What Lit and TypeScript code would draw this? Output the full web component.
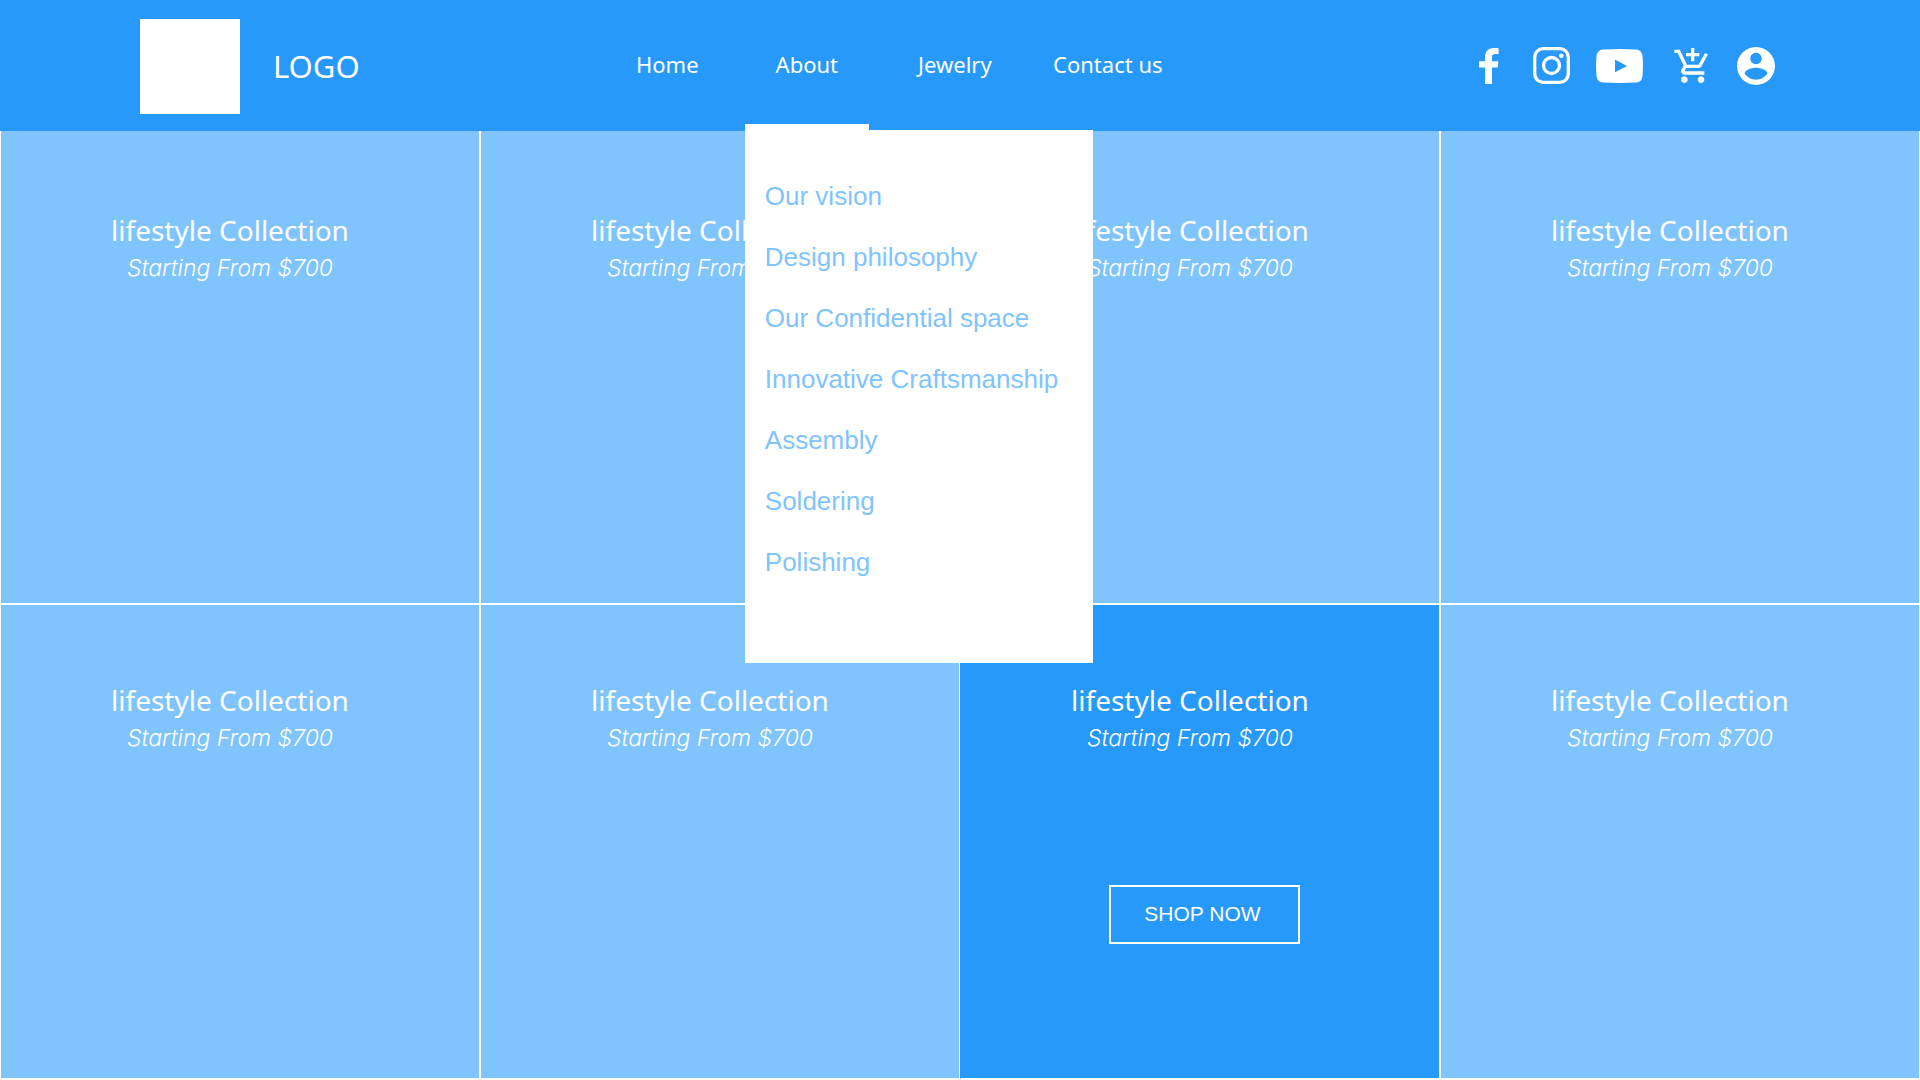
import { LitElement, html, css, svg, nothing } from "lit";
import { customElement, property, state } from "lit/decorators.js";
import { classMap } from "lit/directives/class-map.js";

interface Collection {
  title: string;
  price: string;
  featured?: boolean;
}

const ABOUT_LINKS = [
  "Our vision",
  "Design philosophy",
  "Our Confidential space",
  "Innovative Craftsmanship",
  "Assembly",
  "Soldering",
  "Polishing",
];

const COLLECTIONS: Collection[] = Array.from({ length: 8 }, (_, i) => ({
  title: "lifestyle Collection",
  price: "Starting From $700",
  featured: i === 6,
}));

const ICONS = [
  {
    label: "Facebook",
    box: "0 0 36 36",
    width: 36,
    height: 36,
    shape: svg`<path d="M14 36V19.500H8V13.200H14V9.500C14 3.500 17.300 0 22.500 0C24.800 0 26.800 .2 27.600 .4V6.100H24.200C21.600 6.100 21 7.400 21 9.200V13.200H27.400L26.600 19.500H21V36Z"/>`,
  },
  {
    label: "Instagram",
    box: "0 0 37 37",
    width: 37,
    height: 37,
    shape: svg`<rect x="1.700" y="1.700" width="33.600" height="33.600" rx="8.500" fill="none" stroke="currentColor" stroke-width="3.300"/><circle cx="18.500" cy="18.500" r="8" fill="none" stroke="currentColor" stroke-width="3.300"/><circle cx="28.300" cy="8.700" r="2.300"/>`,
  },
  {
    label: "YouTube",
    box: "0 0 47 34",
    width: 47,
    height: 34,
    shape: svg`<path fill-rule="evenodd" d="M7 .5Q23.500 -.4 40 .5Q45.800 1 46.500 7Q47.400 17 46.500 27Q45.800 33 40 33.500Q23.500 34.400 7 33.500Q1.200 33 .5 27Q-.4 17 .5 7Q1.200 1 7 .5ZM19 10.500V23.300L31 16.900Z"/>`,
  },
  {
    label: "Add to cart",
    box: "-2.2 1 25.2 21",
    width: 42,
    height: 35,
    shape: svg`<path d="M11 9h2V6h3V4h-3V1h-2v3H8v2h3v3zm-4 9c-1.1 0-1.990.9-1.990 2S5.900 22 7 22s2-.9 2-2-.9-2-2-2zm10 0c-1.100 0-1.990.9-1.990 2s.89 2 1.990 2 2-.9 2-2-.9-2-2-2zm-9.830-3.250l.03-.12.9-1.630h7.450c.75 0 1.410-.41 1.750-1.030l3.860-7.010L19.420 4h-.01l-1.100 2-2.760 5H8.530l-.13-.27L6.160 6l-.95-2-.94-2H1v2h2l3.600 7.590-1.350 2.450c-.16.28-.25.61-.25.96 0 1.100.9 2 2 2h12v-2H7.420c-.13 0-.25-.11-.25-.25z"/>`,
  },
  {
    label: "Account",
    box: "2 2 20 20",
    width: 38,
    height: 38,
    shape: svg`<path d="M12 2C6.480 2 2 6.480 2 12s4.480 10 10 10 10-4.480 10-10S17.520 2 12 2zm0 3c1.660 0 3 1.340 3 3s-1.340 3-3 3-3-1.340-3-3 1.340-3 3-3zm0 14.200c-2.500 0-4.710-1.280-6-3.220.03-1.990 4-3.080 6-3.080 1.990 0 5.970 1.090 6 3.080-1.290 1.940-3.500 3.220-6 3.220z"/>`,
  },
];

@customElement("site-header")
class SiteHeader extends LitElement {
  @state() private open = true;

  static styles = css`
    :host {
      display: block;
      position: relative;
      z-index: 1;
      background: #2699fb;
      color: #fff;
      font-family: "Noto Sans", sans-serif;
    }
    .bar {
      display: grid;
      grid-template-columns: minmax(max-content, 28%) auto 1fr;
      align-items: center;
      min-height: 131px;
      padding: 0 145px 0 140px;
      box-sizing: border-box;
    }
    a,
    button {
      color: inherit;
      text-decoration: none;
      font: inherit;
    }
    .brand {
      display: flex;
      align-items: center;
      gap: 33px;
      justify-self: start;
      padding-top: 2px;
      font-size: 31px;
      line-height: 44px;
    }
    .mark {
      width: 100px;
      height: 95px;
      background: #fff;
    }
    .wordmark {
      padding-bottom: 2px;
    }
    .nav {
      display: grid;
      grid-template-columns: 139px 140px 156px 150px;
      justify-items: center;
      align-self: stretch;
      font-size: 22px;
      line-height: 30px;
    }
    .item {
      display: flex;
      align-items: center;
      justify-content: center;
      position: relative;
      padding-bottom: 4px;
      white-space: nowrap;
    }
    .dropdown {
      width: 124px;
    }
    .toggle {
      align-self: stretch;
      flex: 1;
      padding: 0;
      border: 0;
      background: none;
      cursor: pointer;
    }
    .dropdown.open::after {
      content: "";
      position: absolute;
      left: 0;
      right: 0;
      bottom: 0;
      height: 7px;
      background: #fff;
    }
    .menu {
      position: absolute;
      top: 130px;
      left: 0;
      width: 348px;
      box-sizing: border-box;
      margin: 0;
      padding: 36px 20px 70px;
      list-style: none;
      background: #fff;
      color: #7fc4fd;
      font-family: "Liberation Sans", Arial, sans-serif;
      font-size: 26px;
      line-height: 61px;
    }
    .menu a {
      display: block;
    }
    .social {
      display: flex;
      align-items: center;
      justify-self: end;
      gap: 26px;
    }
    .social a,
    .social svg {
      display: block;
    }
  `;

  render() {
    return html`
      <header class="bar">
        <a class="brand" href="#"><span class="mark"></span><span class="wordmark">LOGO</span></a>
        <nav class="nav">
          <a class="item" href="#home">Home</a>
          <div class=${classMap({ item: true, dropdown: true, open: this.open })}>
            <button
              class="toggle"
              aria-expanded=${this.open ? "true" : "false"}
              @click=${() => (this.open = !this.open)}
            >About</button>
            ${this.open
              ? html`<ul class="menu">
                  ${ABOUT_LINKS.map((t) => html`<li><a href="#about">${t}</a></li>`)}
                </ul>`
              : nothing}
          </div>
          <a class="item" href="#jewelry">Jewelry</a>
          <a class="item" href="#contact">Contact us</a>
        </nav>
        <div class="social">
          ${ICONS.map(
            (i) => html`<a href="#" aria-label=${i.label}>
              <svg viewBox=${i.box} width=${i.width} height=${i.height} fill="currentColor" aria-hidden="true">${i.shape}</svg>
            </a>`
          )}
        </div>
      </header>
    `;
  }
}

@customElement("collection-card")
class CollectionCard extends LitElement {
  @property({ attribute: false }) item!: Collection;

  static styles = css`
    :host {
      display: flex;
    }
    .card {
      flex: 1;
      display: flex;
      flex-direction: column;
      align-items: center;
      box-sizing: border-box;
      padding: var(--card-inset, 75px) 20px 20px 0;
      border: 1px solid #fff;
      background: #7fc4fd;
      color: #fff;
    }
    .featured {
      background: #2699fb;
      border-left-color: #2699fb;
    }
    .title {
      margin: 0;
      font: 400 28px/40px "Noto Sans", sans-serif;
    }
    .price {
      margin: 0;
      font: italic 300 23px/36px Inter, sans-serif;
    }
    .shop {
      margin: 129px 0 0 29px;
      padding: 0 37px 2px 33px;
      border: 2px solid #fff;
      background: none;
      color: inherit;
      font: 400 21px/53px "Liberation Sans", Arial, sans-serif;
      cursor: pointer;
    }
  `;

  render() {
    const { title, price, featured } = this.item;
    return html`
      <article class=${classMap({ card: true, featured: !!featured })}>
        <h2 class="title">${title}</h2>
        <p class="price">${price}</p>
        ${featured ? html`<button class="shop">SHOP NOW</button>` : nothing}
      </article>
    `;
  }
}

@customElement("app-root")
class AppRoot extends LitElement {
  static styles = css`
    :host {
      display: block;
      background: #fff;
    }
    .grid {
      display: grid;
      grid-template-columns: repeat(4, 1fr);
      grid-auto-rows: minmax(calc((100vh - 130px) / 2), auto);
      margin-top: -2px;
    }
    .top {
      --card-inset: 80px;
    }
  `;

  render() {
    return html`
      <site-header></site-header>
      <main class="grid">
        ${COLLECTIONS.map(
          (c, i) => html`<collection-card class=${classMap({ top: i < 4 })} .item=${c}></collection-card>`
        )}
      </main>
    `;
  }
}
